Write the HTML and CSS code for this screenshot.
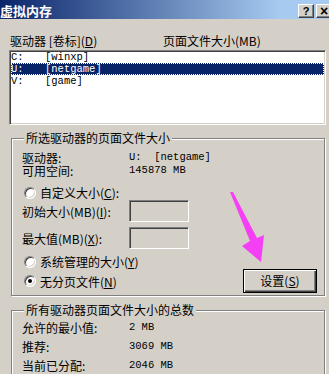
FILE: index.html
```html
<!DOCTYPE html>
<html lang="zh-CN">
<head>
    <meta charset="UTF-8">
    <meta name="viewport" content="width=device-width, initial-scale=1.0">
    <title>虚拟内存</title>
    <link rel="stylesheet" href="styles.css">
</head>
<body>
    <div class="window">
        <div class="titlebar">
            <span class="title">虚拟内存</span>
            <span class="title-buttons">
                <span class="tbtn">?</span>
                <span class="tbtn close">×</span>
            </span>
        </div>

        <div class="list-head">
            <span class="col-drive">驱动器 [卷标](<u>D</u>)</span>
            <span>页面文件大小(MB)</span>
        </div>
        <div class="drive-list">
            <div class="drive-row"><span class="letter">C:</span><span>[winxp]</span></div>
            <div class="drive-row selected"><span class="letter">U:</span><span>[netgame]</span></div>
            <div class="drive-row"><span class="letter">V:</span><span>[game]</span></div>
        </div>

        <fieldset class="group group-selected">
            <legend>所选驱动器的页面文件大小</legend>
            <div class="info-row first">
                <span class="label">驱动器:</span>
                <span class="mono">U:  [netgame]</span>
            </div>
            <div class="info-row">
                <span class="label">可用空间:</span>
                <span class="mono">145878 MB</span>
            </div>

            <div class="radio-row custom">
                <span class="radio"></span>
                <span>自定义大小(<u>C</u>):</span>
            </div>
            <div class="size-row">
                <span class="label">初始大小(MB)(<u>I</u>):</span>
                <span class="textbox"></span>
            </div>
            <div class="size-row second">
                <span class="label">最大值(MB)(<u>X</u>):</span>
                <span class="textbox"></span>
            </div>
            <div class="radio-row system">
                <span class="radio"></span>
                <span>系统管理的大小(<u>Y</u>)</span>
            </div>
            <div class="action-row">
                <div class="radio-row">
                    <span class="radio checked"></span>
                    <span>无分页文件(<u>N</u>)</span>
                </div>
                <button class="button">设置(<u>S</u>)</button>
            </div>
        </fieldset>

        <fieldset class="group group-total">
            <legend>所有驱动器页面文件大小的总数</legend>
            <div class="total-row first">
                <span class="label">允许的最小值:</span>
                <span class="mono">2 MB</span>
            </div>
            <div class="total-row">
                <span class="label">推荐:</span>
                <span class="mono">3069 MB</span>
            </div>
            <div class="total-row">
                <span class="label">当前已分配:</span>
                <span class="mono">2046 MB</span>
            </div>
        </fieldset>

        <!-- annotation arrow drawn over the dialog -->
        <svg class="pointer" width="329" height="374" viewBox="0 0 329 374">
            <polygon points="230,192 233,192 257,238 264,235 261,262 242,246 250,241" fill="#f53ff5"/>
        </svg>
    </div>
</body>
</html>
```

FILE: styles.css
```css
body {
    margin: 0;
    background: #d4d0c8;
    font-family: "Noto Sans CJK SC", sans-serif;
    font-size: 12px;
    color: #000;
}

.window {
    position: relative;
    width: 329px;
    height: 374px;
    overflow: hidden;
    background: #d4d0c8;
}

.titlebar {
    height: 19px;
    display: flex;
    align-items: center;
    justify-content: space-between;
    background: linear-gradient(to right, #0a246a, #a6caf0 85%);
}

.title {
    color: #fff;
    font-weight: bold;
    font-size: 13px;
    line-height: 16px;
    padding-top: 3px;
}

.title-buttons {
    display: flex;
    gap: 2px;
    margin-right: -3px;
    padding-top: 2px;
}

.tbtn {
    width: 14px;
    height: 12px;
    background: #d4d0c8;
    border: 1px solid;
    border-color: #fff #404040 #404040 #fff;
    box-shadow: inset -1px -1px 0 #808080;
    font-family: "Liberation Sans", sans-serif;
    font-weight: bold;
    font-size: 11px;
    line-height: 12px;
    text-align: center;
}

.tbtn.close {
    font-size: 14px;
}

.list-head {
    display: flex;
    margin: 15px 0 0 10px;
    height: 14px;
    line-height: 14px;
}

.col-drive {
    width: 153px;
}

.drive-list {
    margin: 2px 3px 0 9px;
    height: 75px;
    box-sizing: border-box;
    padding: 0 1px;
    background: #fff;
    border: 1px solid;
    border-color: #808080 #fff #fff #808080;
    box-shadow: inset 1px 1px 0 #404040, inset -1px -1px 0 #d4d0c8;
}

.drive-row {
    display: flex;
    height: 12px;
    line-height: 12px;
    font-family: "Liberation Mono", monospace;
    font-size: 10.5px;
}

.drive-row .letter {
    width: 34px;
}

.drive-row.selected {
    background: #0a246a;
    color: #fff;
    outline: 1px dotted #fff;
    outline-offset: -1px;
}

.mono {
    font-family: "Liberation Mono", monospace;
    font-size: 10.5px;
    white-space: pre;
}

.group {
    margin: 7px 4px 0 11px;
    padding: 0 7px 2px 10px;
    border: 1px solid #808080;
    box-shadow: 1px 1px 0 #fff, inset 1px 1px 0 #fff;
    min-width: 0;
}

.group legend {
    margin-left: 2px;
    padding: 0 2px;
    line-height: 12px;
    background: #d4d0c8;
}

.label {
    width: 107px;
    flex-shrink: 0;
}

.info-row {
    display: flex;
    align-items: center;
    height: 13px;
    line-height: 13px;
}

.info-row.first {
    margin-top: 7px;
}

.radio-row {
    display: flex;
    align-items: center;
    height: 13px;
    line-height: 13px;
    padding-left: 2px;
}

.radio-row.custom {
    margin-top: 9px;
}

.radio-row.system {
    margin-top: 6px;
}

.radio {
    width: 12px;
    height: 12px;
    box-sizing: border-box;
    margin-right: 4px;
    border-radius: 50%;
    background: #fff;
    border: 1px solid;
    border-color: #808080 #fff #fff #808080;
    box-shadow: inset 1px 1px 0 #404040, inset -1px -1px 0 #d4d0c8;
    display: flex;
    align-items: center;
    justify-content: center;
}

.radio.checked::after {
    content: "";
    width: 4px;
    height: 4px;
    border-radius: 50%;
    background: #000;
}

.size-row {
    display: flex;
    align-items: center;
    margin-top: 1px;
    height: 22px;
}

.size-row.second {
    margin-top: 5px;
}

.textbox {
    width: 60px;
    height: 22px;
    box-sizing: border-box;
    background: #d4d0c8;
    border: 1px solid;
    border-color: #808080 #fff #fff #808080;
    box-shadow: inset 1px 1px 0 #404040, inset -1px -1px 0 #d4d0c8;
}

.action-row {
    display: flex;
    align-items: center;
    margin-top: 1px;
    height: 24px;
}

.button {
    margin-left: auto;
    width: 74px;
    height: 24px;
    padding: 0;
    background: #d4d0c8;
    border: 1px solid #000;
    box-shadow: inset 1px 1px 0 #fff, inset -1px -1px 0 #404040, inset -2px -2px 0 #808080;
    font-family: "Noto Sans CJK SC", sans-serif;
    font-size: 12px;
    line-height: 20px;
    color: #000;
}

.group-total {
    margin-top: 8px;
    padding-bottom: 10px;
}

.total-row {
    display: flex;
    align-items: center;
    height: 19px;
    line-height: 19px;
}

.total-row.first {
    margin-top: 2px;
}

.pointer {
    position: absolute;
    left: 0;
    top: 0;
    pointer-events: none;
}
```
